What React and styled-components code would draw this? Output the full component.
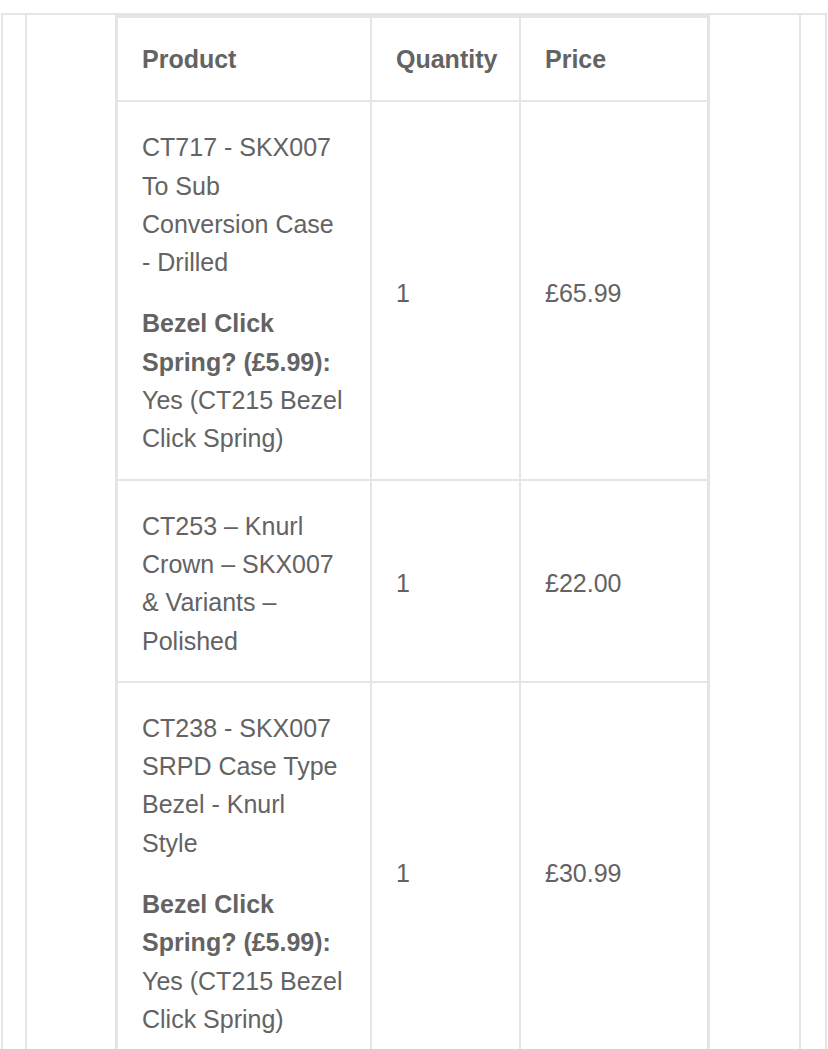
import React from "react";
import styled, { createGlobalStyle } from "styled-components";

const GlobalStyle = createGlobalStyle`
  * {
    box-sizing: border-box;
  }
  body {
    margin: 0;
    background: #ffffff;
    font-family: "Liberation Sans", Arial, Helvetica, sans-serif;
    color: #636363;
  }
`;

const line = "#e5e5e5";

const items = [
  {
    id: 1,
    name: "CT717 - SKX007 To Sub Conversion Case - Drilled",
    meta: { label: "Bezel Click Spring? (£5.99):", value: "Yes (CT215 Bezel Click Spring)" },
    quantity: 1,
    price: "£65.99",
  },
  {
    id: 2,
    name: "CT253 – Knurl Crown – SKX007 & Variants – Polished",
    quantity: 1,
    price: "£22.00",
  },
  {
    id: 3,
    name: "CT238 - SKX007 SRPD Case Type Bezel - Knurl Style",
    meta: { label: "Bezel Click Spring? (£5.99):", value: "Yes (CT215 Bezel Click Spring)" },
    quantity: 1,
    price: "£30.99",
  },
];

const columns = [
  { key: "product", label: "Product", width: 254 },
  { key: "quantity", label: "Quantity", width: 149 },
  { key: "price", label: "Price", width: 188 },
];

const Wrapper = styled.div`
  margin: 13px 0 0 1px;
  width: 826px;
  border: 2px solid ${line};
  border-bottom: none;
`;

const Container = styled.div`
  margin-left: 22px;
  width: 776px;
  border-left: 2px solid ${line};
  border-right: 2px solid ${line};
  padding: 0 88px;
`;

const OrderTable = styled.table`
  width: 595px;
  table-layout: fixed;
  border-collapse: separate;
  border-spacing: 0;
  border: 2px solid ${line};
  font-size: 25px;
  line-height: 38.3px;
`;

const HeadCell = styled.th`
  width: ${(p) => p.$width}px;
  border: 1px solid ${line};
  padding: 22px 23.5px 22px 24px;
  text-align: left;
  font-weight: bold;
  color: #636363;
`;

const Cell = styled.td`
  border: 1px solid ${line};
  padding: 26px 23.5px 21px 24px;
  text-align: left;
  vertical-align: middle;
  color: #636363;
  word-wrap: break-word;
`;

const ProductName = styled.div``;

const Meta = styled.div`
  margin-top: 23px;
`;

const MetaLabel = styled.strong`
  font-weight: bold;
`;

function OrderItem({ item }) {
  return (
    <tr>
      <Cell>
        <ProductName>{item.name}</ProductName>
        {item.meta && (
          <Meta>
            <MetaLabel>{item.meta.label}</MetaLabel> {item.meta.value}
          </Meta>
        )}
      </Cell>
      <Cell>{item.quantity}</Cell>
      <Cell>{item.price}</Cell>
    </tr>
  );
}

export default function App() {
  return (
    <>
      <GlobalStyle />
      <Wrapper>
        <Container>
          <OrderTable>
            <thead>
              <tr>
                {columns.map((col) => (
                  <HeadCell key={col.key} $width={col.width}>
                    {col.label}
                  </HeadCell>
                ))}
              </tr>
            </thead>
            <tbody>
              {items.map((item) => (
                <OrderItem key={item.id} item={item} />
              ))}
            </tbody>
          </OrderTable>
        </Container>
      </Wrapper>
    </>
  );
}
